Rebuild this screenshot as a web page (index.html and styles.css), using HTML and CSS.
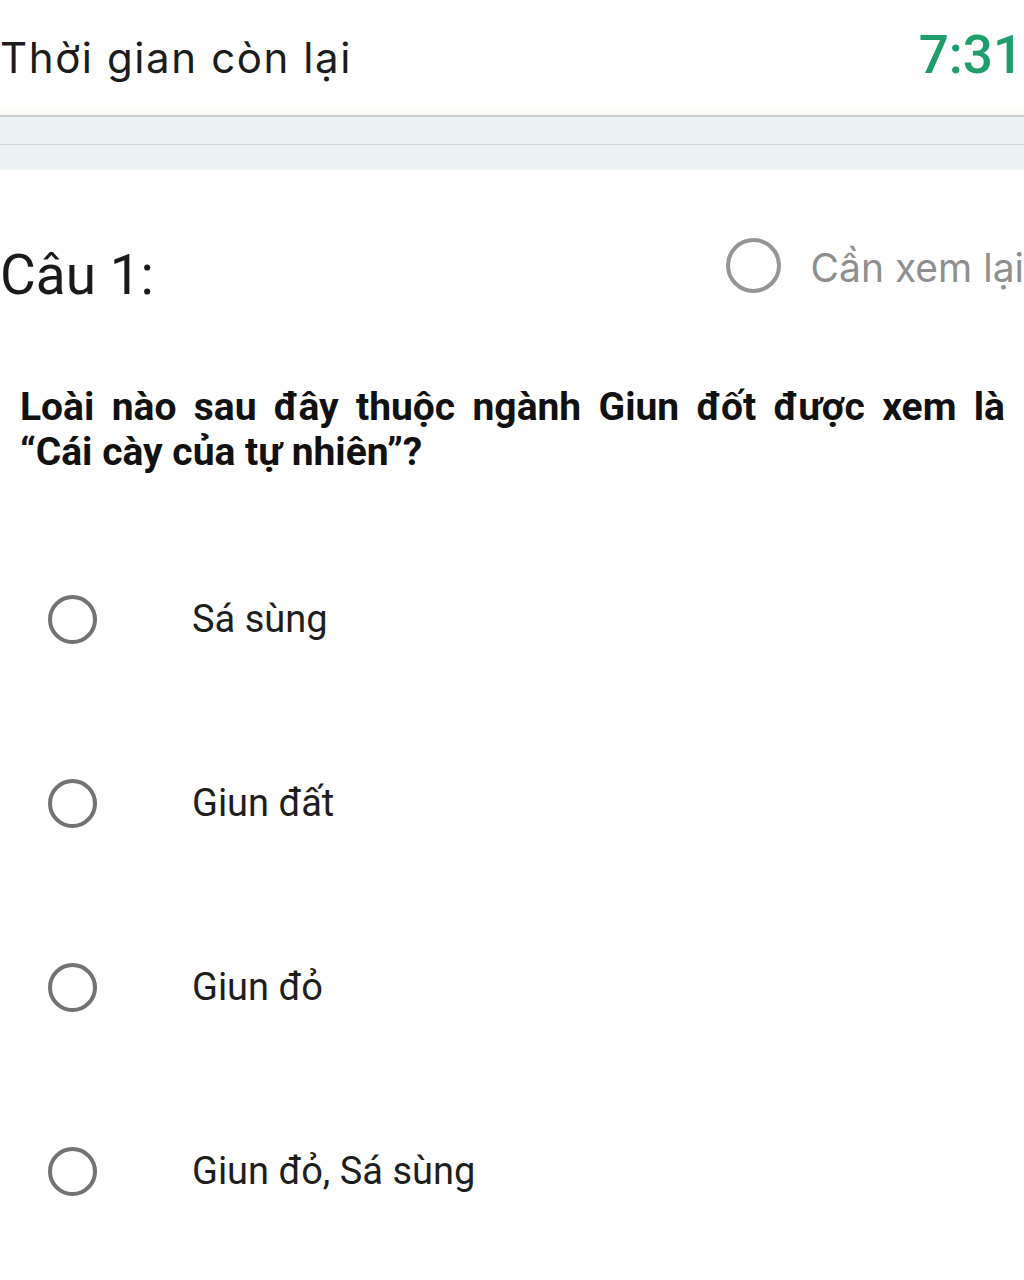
FILE: index.html
```html
<!DOCTYPE html>
<html lang="vi">
<head>
<meta charset="utf-8">
<title>Câu hỏi</title>
<link rel="stylesheet" href="styles.css">
</head>
<body>
<header class="timer">
  <span class="timer-label">Thời gian còn lại</span>
  <span class="timer-value">7:31</span>
</header>
<div class="timer-shade"></div>
<div class="progress"><div class="progress-top"></div><div class="progress-bottom"></div></div>

<section class="question-head">
  <h2 class="question-no">Câu 1:</h2>
  <label class="review">
    <span class="radio radio-review"></span>
    <span class="review-text">Cần xem lại</span>
  </label>
</section>

<p class="question-text">Loài nào sau đây thuộc ngành Giun đốt được xem là “Cái cày của tự nhiên”?</p>

<ul class="options">
  <li class="option"><span class="radio"></span><span class="option-text">Sá sùng</span></li>
  <li class="option"><span class="radio"></span><span class="option-text">Giun đất</span></li>
  <li class="option"><span class="radio"></span><span class="option-text">Giun đỏ</span></li>
  <li class="option"><span class="radio"></span><span class="option-text">Giun đỏ, Sá sùng</span></li>
</ul>
</body>
</html>
```
FILE: styles.css
```css
html, body {
  margin: 0;
  padding: 0;
  background: #ffffff;
  width: 1024px;
  overflow: hidden;
}
body {
  font-family: Roboto, "Noto Sans", sans-serif;
  color: #1a1a1a;
}
.timer {
  height: 100px;
  box-sizing: border-box;
  padding: 0 1px 0 0;
  display: flex;
  justify-content: space-between;
  align-items: baseline;
}
.timer-label {
  font-family: Inter, Roboto, sans-serif;
  font-size: 42px;
  line-height: 110px;
  color: #1c1c1c;
  letter-spacing: 1.6px;
}
.timer-value {
  font-family: Roboto, sans-serif;
  font-weight: 500;
  font-size: 53px;
  line-height: 110px;
  color: #1f9e6b;
}
.timer-shade {
  height: 15px;
  background: linear-gradient(#ffffff, #fbfaf3);
}
.progress {
  height: 55px;
  display: flex;
  flex-direction: column;
}
.progress-top {
  height: 27px;
  border-top: 2px solid #c7cfd1;
  border-bottom: 1px solid #cdd6d9;
  background: #ecf1f2;
}
.progress-bottom {
  flex: 1;
  background: #ecf1f2;
}
.question-head {
  margin-top: 72px;
  display: flex;
  justify-content: space-between;
  align-items: flex-start;
}
.question-no {
  margin: 0;
  font-weight: 400;
  font-size: 55px;
  line-height: 67px;
  color: #1a1a1a;
}
.review {
  display: flex;
  align-items: center;
  gap: 30px;
  margin-top: -4px;
}
.radio {
  display: block;
  box-sizing: border-box;
  width: 49px;
  height: 49px;
  border: 4.5px solid #727272;
  border-radius: 50%;
  flex: none;
}
.radio-review {
  width: 55px;
  height: 55px;
  border-color: #959595;
}
.review-text {
  font-family: Inter, Roboto, sans-serif;
  font-size: 39px;
  color: #8f8f8f;
  white-space: nowrap;
  position: relative;
  top: 2px;
}
.question-text {
  margin: 76px 19px 0 20px;
  font-weight: 700;
  font-size: 39px;
  line-height: 45px;
  text-align: justify;
  color: #111111;
}
.options {
  list-style: none;
  margin: 52px 0 0 0;
  padding: 0;
}
.option {
  height: 184px;
  display: flex;
  align-items: center;
  padding-left: 48px;
}
.option-text {
  margin-left: 95px;
  font-size: 38px;
  color: #1e1e1e;
}
```
